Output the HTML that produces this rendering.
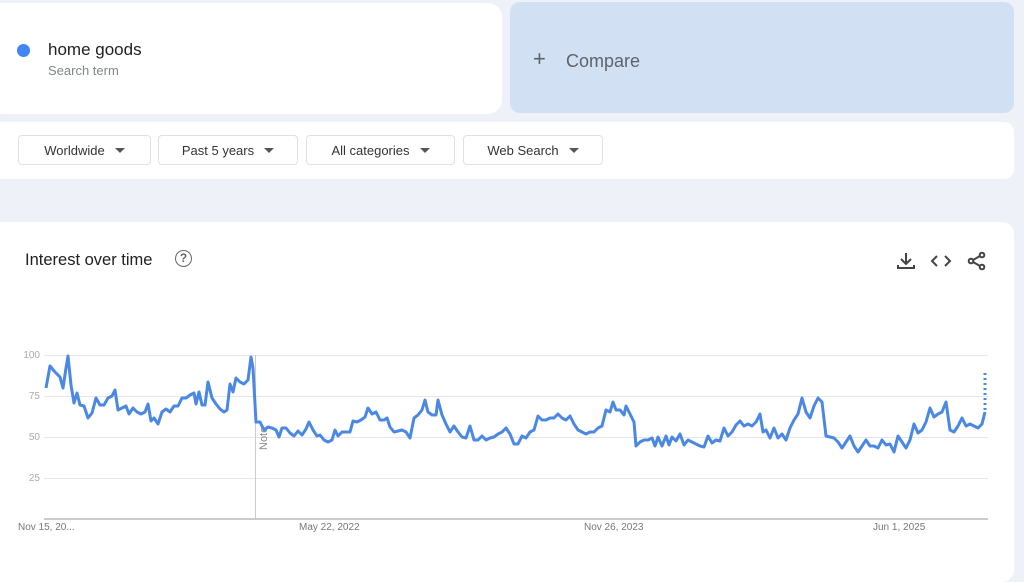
<!DOCTYPE html>
<html><head><meta charset="utf-8"><style>
body{margin:0;width:1024px;height:561px;overflow:hidden;background:#eef1f8;font-family:"Liberation Sans",Arial,sans-serif;position:relative}
.card{position:absolute;background:#fff}
.btn{position:absolute;top:135px;height:30px;border:1px solid #dfe1e5;border-radius:4px;background:#fff;font-size:13px;color:#333;display:flex;align-items:center;justify-content:center;box-sizing:border-box}
.btn:after{content:"";border-left:5px solid transparent;border-right:5px solid transparent;border-top:5px solid #555;margin-left:10px}
.yl{position:absolute;left:0;width:40px;text-align:right;font-size:10px;color:#aaa}
.xl{position:absolute;top:522px;font-size:10px;color:#777}
</style></head><body>
<div class="card" style="left:-12px;top:3px;width:514px;height:111px;border-radius:14px"></div>
<div style="position:absolute;left:17px;top:44px;width:13px;height:13px;border-radius:50%;background:#4285f4"></div>
<div style="position:absolute;left:48px;top:40px;font-size:17px;color:#202124">home goods</div>
<div style="position:absolute;left:48px;top:63px;font-size:13px;color:#80868b">Search term</div>
<div class="card" style="left:510px;top:2px;width:504px;height:111px;border-radius:10px;background:#d2e0f4"></div>
<div style="position:absolute;left:533px;top:46px;font-size:22px;color:#5f6368;font-weight:300">+</div>
<div style="position:absolute;left:566px;top:51px;font-size:18px;color:#5f6368">Compare</div>
<div class="card" style="left:-12px;top:122px;width:1026px;height:57px;border-radius:10px"></div>
<div class="btn" style="left:18px;width:133px">Worldwide</div>
<div class="btn" style="left:158px;width:140px">Past 5 years</div>
<div class="btn" style="left:306px;width:149px">All categories</div>
<div class="btn" style="left:463px;width:140px">Web Search</div>
<div class="card" style="left:-12px;top:222px;width:1026px;height:360px;border-radius:12px"></div>
<div style="position:absolute;left:25px;top:251px;font-size:16.5px;color:#202124">Interest over time</div>
<div style="position:absolute;left:175px;top:250px;width:15px;height:15px;border:1.5px solid #666;border-radius:50%;font-size:12px;line-height:15px;text-align:center;color:#666;font-weight:bold">?</div>
<svg style="position:absolute;left:895px;top:250px" width="100" height="22" fill="none" stroke="#444" stroke-width="2">
<path d="M11 3v10M6 9l5 5 5-5M3 15v3h16v-3"/>
<path d="M42 6l-5 5 5 5M50 6l5 5-5 5"/>
<circle cx="87" cy="5" r="2.3"/><circle cx="76" cy="11" r="2.3"/><circle cx="87" cy="17" r="2.3"/><path d="M85 6L78 10M78 12L85 16"/>
</svg>
<div class="yl" style="top:350px">100</div><div class="yl" style="top:391px">75</div><div class="yl" style="top:432px">50</div><div class="yl" style="top:473px">25</div>
<div class="xl" style="left:18px">Nov 15, 20...</div><div class="xl" style="left:299px">May 22, 2022</div><div class="xl" style="left:584px">Nov 26, 2023</div><div class="xl" style="left:873px">Jun 1, 2025</div>
<svg style="position:absolute;left:0;top:0" width="1024" height="561">
<g stroke="#e6e6e6" stroke-width="1"><path d="M44 355.5H988M44 396.5H988M44 437.5H988M44 478.5H988"/></g>
<path d="M44 519H988" stroke="#ccc" stroke-width="2"/>
<path d="M255.5 355V519" stroke="#ccc"/>
<text x="267" y="450" transform="rotate(-90 267 450)" font-size="11" fill="#888" font-family="Liberation Sans">Note</text>
<polyline fill="none" stroke="#4a88e4" stroke-width="3" stroke-linejoin="round" points="46,388 50,366 55,372 60,377 63,388 66,368 68,356 71,385 74,403 77,393 80,405 84,406 88,418 92,413 96,398 100,405 104,405 108,398 112,396 115,390 118,410 122,408 126,406 129,414 133,408 137,412 141,414 145,412 148,404 151,421 154,418 158,424 162,412 166,409 170,412 174,406 178,406 182,398 186,398 190,395 194,393 196,404 199,392 202,405 205,405 208,382 212,398 216,404 220,409 224,412 227,410 230,384 233,392 236,378 240,382 244,384 248,380 251,357 253,368 256,422 260,422 264,430 268,427 272,428 276,430 279,437 282,428 286,428 290,433 294,436 298,431 302,435 306,429 309,422 313,430 317,436 320,435 324,440 328,442 332,440 335,430 338,436 342,432 346,432 350,432 353,421 357,422 361,420 365,417 368,408 372,414 376,412 380,420 384,420 387,418 390,427 394,432 398,431 402,430 406,432 410,438 414,418 418,415 422,410 425,400 428,412 432,415 436,415 438,400 442,415 446,424 450,432 454,426 458,432 462,437 466,438 470,426 474,440 478,440 482,436 486,440 490,438 494,437 498,434 502,432 506,428 510,434 514,444 518,444 522,436 526,438 530,432 534,430 538,416 542,420 546,420 550,418 554,418 558,414 562,418 566,420 570,416 574,424 578,430 582,432 586,434 590,432 594,432 598,428 602,426 606,410 610,412 613,402 616,410 620,410 624,415 626,406 630,414 634,422 636,446 640,442 644,440 648,440 652,438 655,446 658,437 662,446 666,436 669,445 672,437 676,441 680,434 684,445 688,440 692,442 696,444 700,446 704,447 708,436 712,443 716,440 720,441 724,428 728,436 732,432 736,425 740,421 744,426 748,424 752,426 756,422 760,414 763,432 766,430 770,438 774,428 778,438 782,434 786,440 790,428 794,420 798,414 802,398 806,412 810,418 814,406 818,398 822,402 826,436 830,437 834,438 838,442 842,448 846,442 850,436 854,446 858,452 862,446 866,440 870,446 874,446 878,448 882,440 886,445 890,444 894,452 898,436 902,442 906,448 910,440 914,424 918,433 922,430 926,422 930,408 934,417 938,414 942,412 946,402 950,430 954,432 958,426 962,418 966,426 970,424 974,426 978,428 982,424 985,412"/>
<path d="M985 410V370" stroke="#4a88e4" stroke-width="3" stroke-dasharray="2 3"/>
</svg>
</body></html>
